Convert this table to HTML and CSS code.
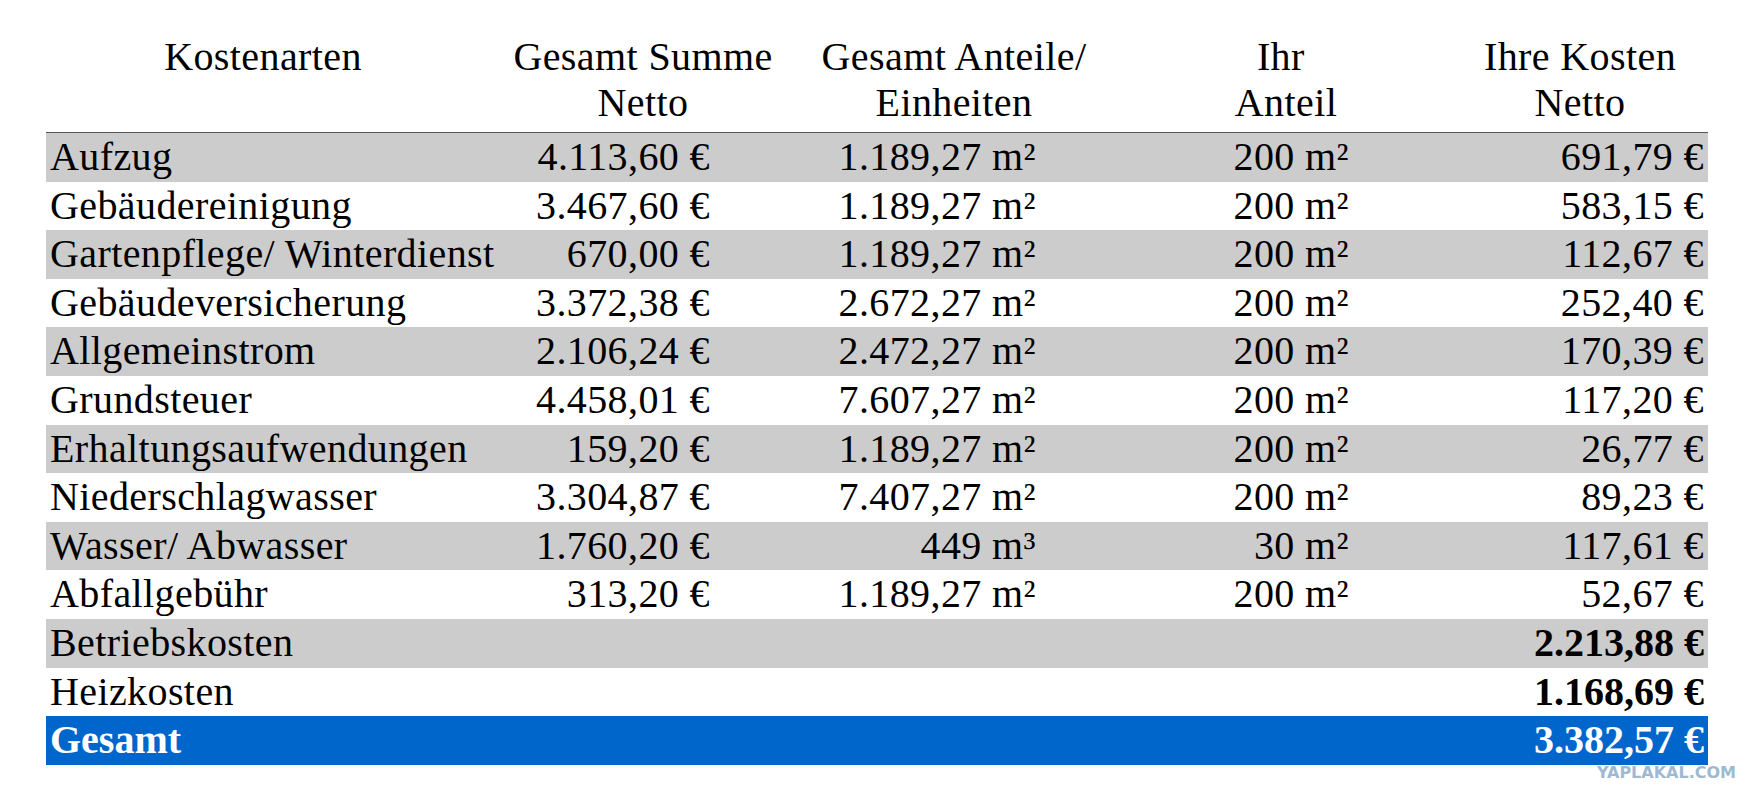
FILE: index.html
```html
<!DOCTYPE html>
<html lang="de">
<head>
<meta charset="utf-8">
<title>Kostenarten</title>
<link rel="stylesheet" href="styles.css">
</head>
<body>
<div class="page">
  <div class="sheet">
    <div class="head">
      <div class="hc">Kostenarten</div>
      <div class="hc">Gesamt Summe<br>Netto</div>
      <div class="hc">Gesamt Anteile/<br>Einheiten</div>
      <div class="hc">Ihr&nbsp;<br>Anteil</div>
      <div class="hc">Ihre Kosten<br>Netto</div>
      <div class="hc"></div>
    </div>
    <div class="body">
      <div class="row alt"><div class="c lab">Aufzug</div><div class="c num">4.113,60 €</div><div class="c num">1.189,27 m²</div><div class="c num share">200 m²</div><div class="c num">691,79 €</div></div>
      <div class="row"><div class="c lab">Gebäudereinigung</div><div class="c num">3.467,60 €</div><div class="c num">1.189,27 m²</div><div class="c num share">200 m²</div><div class="c num">583,15 €</div></div>
      <div class="row alt"><div class="c lab">Gartenpflege/ Winterdienst</div><div class="c num">670,00 €</div><div class="c num">1.189,27 m²</div><div class="c num share">200 m²</div><div class="c num">112,67 €</div></div>
      <div class="row"><div class="c lab">Gebäudeversicherung</div><div class="c num">3.372,38 €</div><div class="c num">2.672,27 m²</div><div class="c num share">200 m²</div><div class="c num">252,40 €</div></div>
      <div class="row alt"><div class="c lab">Allgemeinstrom</div><div class="c num">2.106,24 €</div><div class="c num">2.472,27 m²</div><div class="c num share">200 m²</div><div class="c num">170,39 €</div></div>
      <div class="row"><div class="c lab">Grundsteuer</div><div class="c num">4.458,01 €</div><div class="c num">7.607,27 m²</div><div class="c num share">200 m²</div><div class="c num">117,20 €</div></div>
      <div class="row alt"><div class="c lab">Erhaltungsaufwendungen</div><div class="c num">159,20 €</div><div class="c num">1.189,27 m²</div><div class="c num share">200 m²</div><div class="c num">26,77 €</div></div>
      <div class="row"><div class="c lab">Niederschlagwasser</div><div class="c num">3.304,87 €</div><div class="c num">7.407,27 m²</div><div class="c num share">200 m²</div><div class="c num">89,23 €</div></div>
      <div class="row alt"><div class="c lab">Wasser/ Abwasser</div><div class="c num">1.760,20 €</div><div class="c num">449 m³</div><div class="c num share">30 m²</div><div class="c num">117,61 €</div></div>
      <div class="row"><div class="c lab">Abfallgebühr</div><div class="c num">313,20 €</div><div class="c num">1.189,27 m²</div><div class="c num share">200 m²</div><div class="c num">52,67 €</div></div>
      <div class="row alt"><div class="c lab">Betriebskosten</div><div class="c num"></div><div class="c num"></div><div class="c num share"></div><div class="c num strong">2.213,88 €</div></div>
      <div class="row"><div class="c lab">Heizkosten</div><div class="c num"></div><div class="c num"></div><div class="c num share"></div><div class="c num strong">1.168,69 €</div></div>
      <div class="row total"><div class="c lab">Gesamt</div><div class="c num"></div><div class="c num"></div><div class="c num share"></div><div class="c num strong">3.382,57 €</div></div>
    </div>
  </div>
  <div class="mark-line">
    <div class="mark">YAPLAKAL.COM</div>
  </div>
</div>
</body>
</html>
```

FILE: styles.css
```css
html, body {
  margin: 0;
  padding: 0;
  background: #ffffff;
}

.page {
  width: 1762px;
  height: 801px;
  overflow: hidden;
  padding-top: 34px;
  box-sizing: border-box;
  font-family: "Liberation Serif", "Times New Roman", serif;
  color: #000000;
}

.sheet {
  margin-left: 46px;
  width: 1662px;
}

.head {
  display: grid;
  grid-template-columns: 434px 326px 296px 368px 220px 18px;
  font-size: 40px;
  line-height: 46px;
  letter-spacing: 0.4px;
  padding-bottom: 6px;
  border-bottom: 1px solid #555555;
}

.hc {
  text-align: center;
  white-space: nowrap;
}

.row {
  display: grid;
  grid-template-columns: 480px 188px 326px 311px 357px;
  height: 48.6px;
  font-size: 40px;
  line-height: 48.6px;
  letter-spacing: 0.4px;
  white-space: nowrap;
}

.row.alt {
  background: #cccccc;
}

.row.total {
  background: #0066cc;
  color: #ffffff;
}

.row.total .lab {
  font-weight: bold;
  letter-spacing: 0;
}

.c {
  padding: 0 4px;
}

.num {
  text-align: right;
}

.share {
  padding-right: 2px;
}

.strong {
  font-weight: bold;
  letter-spacing: 0;
}

.mark-line {
  display: flex;
  justify-content: flex-end;
  padding-right: 26px;
  margin-top: 1px;
}

.mark {
  font-family: "DejaVu Sans", sans-serif;
  font-weight: bold;
  font-size: 16px;
  line-height: 14px;
  letter-spacing: 0;
  color: #a0b9d2;
}
```
